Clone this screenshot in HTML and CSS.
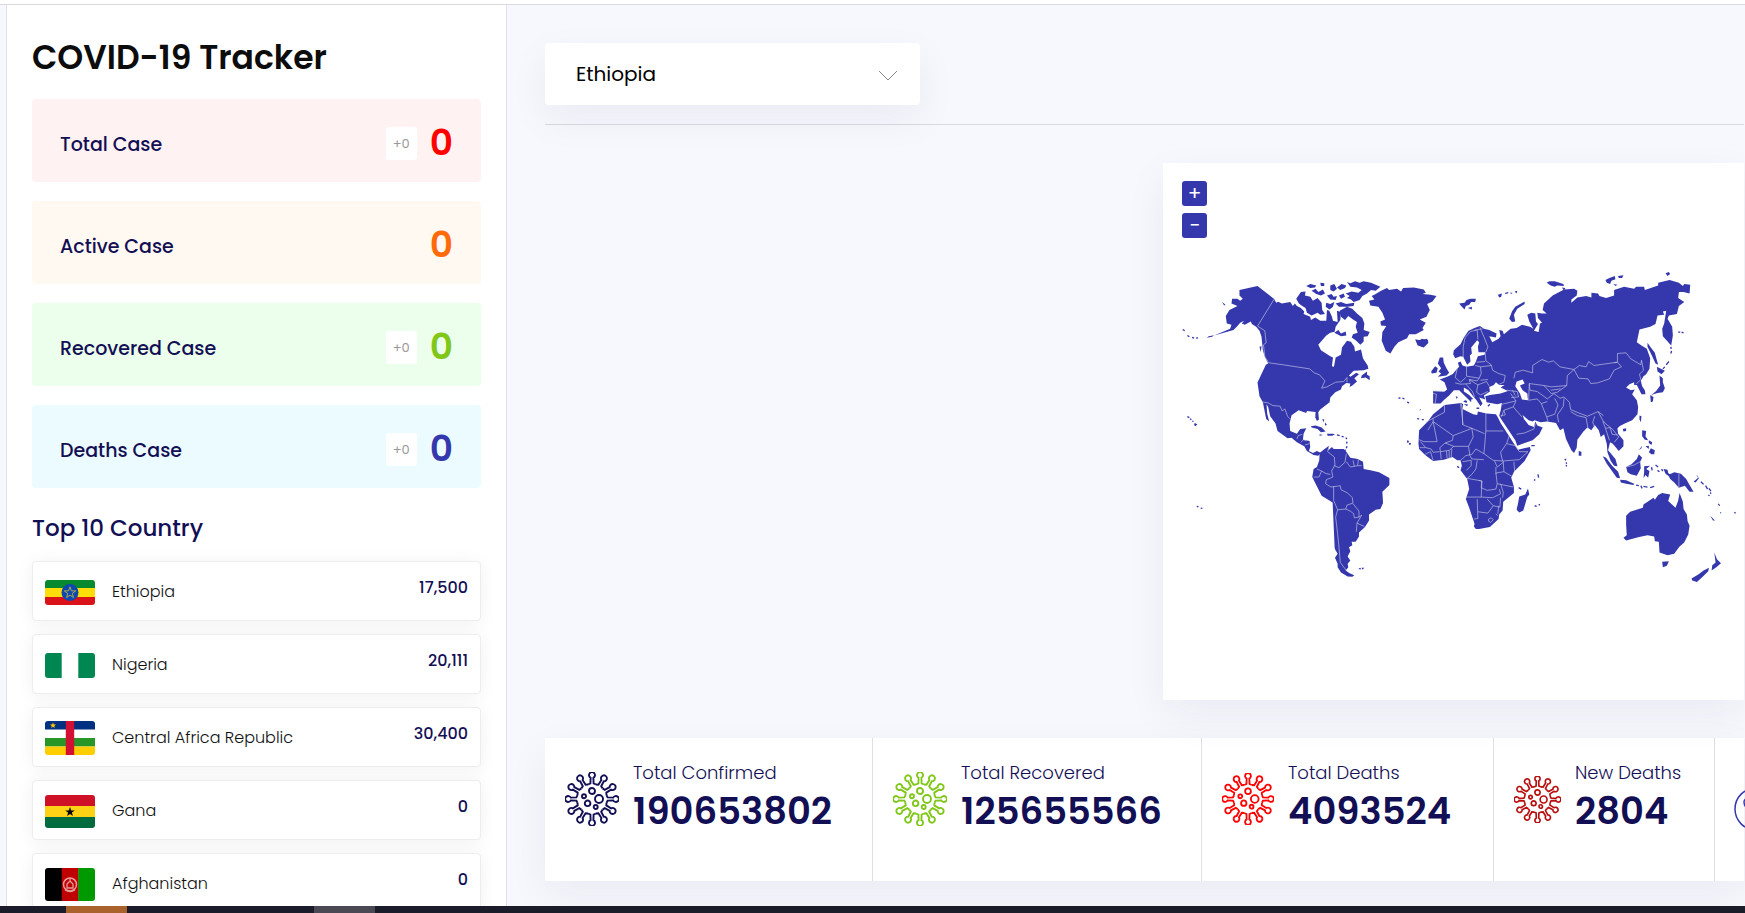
FILE: index.html
```html
<!DOCTYPE html>
<html lang="en">
<head>
<meta charset="utf-8">
<title>COVID-19 Tracker</title>
<link rel="stylesheet" href="styles.css">
</head>
<body>
<svg class="defs" aria-hidden="true">
  <defs>
    <path id="spike" d="M-3.9-14.5L-1.6-15.6L-1.4-21.2A3 3 0 1 1 1.4-21.2L1.6-15.6L3.9-14.5"/>
    <symbol id="virus" viewBox="-27 -27 54 54">
      <g fill="none" stroke="currentColor" stroke-width="1.9">
        <use href="#spike"/><use href="#spike" transform="rotate(30)"/><use href="#spike" transform="rotate(60)"/>
        <use href="#spike" transform="rotate(90)"/><use href="#spike" transform="rotate(120)"/><use href="#spike" transform="rotate(150)"/>
        <use href="#spike" transform="rotate(180)"/><use href="#spike" transform="rotate(210)"/><use href="#spike" transform="rotate(240)"/>
        <use href="#spike" transform="rotate(270)"/><use href="#spike" transform="rotate(300)"/><use href="#spike" transform="rotate(330)"/>
        <circle cy="-8" r="3"/><circle cx="7" r="4"/><circle cx="-8" cy="-2.8" r="2"/><circle cx="-4.4" cy="4.3" r="2.8"/><circle cx="3.7" cy="8" r="2"/>
      </g>
    </symbol>
    <path id="star" d="M0-5L1.2-1.6H4.8L1.9.6L2.9 4L0 1.9L-2.9 4L-1.9.6L-4.8-1.6H-1.2Z"/>
  </defs>
</svg>
<div class="page">
  <div class="topline"></div>
  <div class="layout">
    <aside class="sidebar">
      <h1>COVID-19 Tracker</h1>
      <div class="cases">
        <div class="case total"><span class="name">Total Case</span><span class="delta">+0</span><strong>0</strong></div>
        <div class="case active"><span class="name">Active Case</span><strong>0</strong></div>
        <div class="case recovered"><span class="name">Recovered Case</span><span class="delta">+0</span><strong>0</strong></div>
        <div class="case deaths"><span class="name">Deaths Case</span><span class="delta">+0</span><strong>0</strong></div>
      </div>
      <h2>Top 10 Country</h2>
      <ul class="countries">
        <li>
          <svg class="flag" viewBox="0 0 50 25"><path fill="#078930" d="M0 0h50v9H0z"/><path fill="#fcdd09" d="M0 8h50v9H0z"/><path fill="#da121a" d="M0 17h50v8H0z"/><circle cx="25" cy="12.5" r="8.5" fill="#0f47af"/><use href="#star" transform="translate(25 12.8) scale(1.2)" fill="none" stroke="#a9b04e" stroke-width=".8"/></svg>
          <span>Ethiopia</span><b>17,500</b>
        </li>
        <li>
          <svg class="flag" viewBox="0 0 50 25"><path fill="#fff" d="M0 0h50v25H0z"/><path fill="#008751" d="M0 0h16.7v25H0zM33.3 0H50v25H33.3z"/></svg>
          <span>Nigeria</span><b>20,111</b>
        </li>
        <li>
          <svg class="flag" viewBox="0 0 50 34"><path fill="#fff" d="M0 0h50v34H0z"/><path fill="#003082" d="M0 0h50v8.5H0z"/><path fill="#289728" d="M0 17h50v8.5H0z"/><path fill="#ffce00" d="M0 25.500h50V34H0z"/><path fill="#d21034" d="M20.800 0h8.400v34h-8.400z"/><use href="#star" transform="translate(8 4.500) scale(.65)" fill="#ffce00"/></svg>
          <span>Central Africa Republic</span><b>30,400</b>
        </li>
        <li>
          <svg class="flag" viewBox="0 0 50 33"><path fill="#ce1126" d="M0 0h50v11H0z"/><path fill="#fcd116" d="M0 11h50v11H0z"/><path fill="#006b3f" d="M0 22h50v11H0z"/><use href="#star" transform="translate(25 17)"/></svg>
          <span>Gana</span><b>0</b>
        </li>
        <li>
          <svg class="flag" viewBox="0 0 50 33"><path d="M0 0h17v33H0z"/><path fill="#be0000" d="M16.700 0h17v33h-17z"/><path fill="#009900" d="M33.300 0H50v33H33.300z"/><g fill="none" stroke="#e89a9a"><circle cx="25" cy="16.500" r="6.500" stroke-width="1.500"/><path d="M22 20v-4l3-3l3 3v4zM20 22q5 3 10 0M25 10v3" stroke-width="1.300"/></g></svg>
          <span>Afghanistan</span><b>0</b>
        </li>
      </ul>
    </aside>
    <main>
      <div class="toolbar">
        <div class="picker">
          <select aria-label="Country"><option>Ethiopia</option><option>Nigeria</option><option>Afghanistan</option></select>
          <svg viewBox="0 0 20 12"><path d="M1 1L10 10L19 1" fill="none" stroke="#888"/></svg>
        </div>
      </div>
      <section class="mapcard" aria-label="World map">
        <div class="zoom"><button type="button" aria-label="Zoom in">+</button><button type="button" aria-label="Zoom out">−</button></div>
        <svg class="map" viewBox="39 330 1740 1020">
          <g class="land">
            <path d="M268 420L322 408L372 447L378 458L384 455L395 460L420 456L428 468L434 460L440 468L452 474L462 484L460 492L480 500L482 510L495 502L510 512L528 512L530 480L537 482L545 500L548 512L562 516L560 482L572 486L570 510L556 530L553 545L540 548L528 556L504 584L512 600L540 618L548 622L545 648L551 650L556 622L572 614L575 592L590 572L602 575L612 590L614 604L632 598L638 625L652 646L654 656L640 660L610 662L596 676L600 680L618 668L626 672L612 684L620 694L606 706L598 710L600 700L588 698L575 708L572 718L555 726L540 742L538 756L510 778L504 786L506 808L500 812L495 802L496 785L470 782L468 788L445 780L424 795L418 820L420 842L440 850L450 836L468 834L460 850L458 868L478 872L480 890L476 902L488 908L500 902L512 908L504 916L490 914L470 902L462 888L440 876L424 862L412 864L382 842L376 820L360 798L354 770L349 762L351 790L357 814L348 806L344 786L338 756L328 738L322 697L347 644L354 640L344 620L338 600L334 560L328 542L318 530L305 522L302 514L284 524L275 520L282 512L270 518L262 528L250 540L192 556L240 536L244 524L230 520L227 498L238 480L250 474L262 468L244 460L246 446L262 446L270 452L278 446L268 436Z"/>
            <path d="M676 432L692 422L710 414L716 420L740 416L752 424L758 414L790 412L820 418L826 428L816 432L840 434L858 438L846 454L830 462L838 480L828 500L808 508L826 518L816 534L820 540L796 552L776 552L770 564L744 576L732 590L720 610L706 602L694 572L696 546L708 528L692 526L690 514L704 508L696 488L684 470L660 466L656 452L672 448L664 438Z"/>
            <path d="M650 664L634 676L632 684L646 682L658 690L658 678L650 674ZM796 568L806 572L814 566L832 570L832 580L818 591L802 584ZM438 446L452 426L466 424L464 436L480 440L488 452L502 444L514 458L516 480L524 492L510 494L502 488L484 496L470 488L466 474L456 468L446 460ZM468 408L480 402L498 406L494 412L480 414ZM510 398L522 400L522 408L512 408ZM484 422L496 416L504 426L518 418L524 430L512 436L498 432ZM540 406L552 402L560 416L550 424L540 420ZM560 412L574 402L588 406L584 414L570 420ZM590 396L600 400L614 394L628 398L640 394L662 398L690 410L676 422L662 420L650 430L636 438L628 450L610 456L602 448L590 444L598 438L586 430L604 424L624 428L634 420L620 412L600 410ZM530 436L544 432L550 440L560 438L556 450L540 448ZM528 458L540 462L552 456L548 470L538 478L526 470ZM566 436L580 430L584 440L572 446ZM556 460L572 456L588 462L612 458L610 468L590 470L566 470ZM568 482L590 470L606 476L620 490L636 504L642 520L640 540L658 546L652 558L640 560L640 574L630 584L616 570L604 562L608 552L622 548L616 530L620 516L608 508L594 498L584 510L572 500ZM552 548L564 540L572 550L586 544L588 556L572 558L564 554ZM216 456L226 464L222 466ZM328 590L334 588L332 606ZM482 828L496 826L514 832L526 844L512 846L502 836L484 832ZM530 850L548 850L554 852L546 856L532 856ZM508 852L518 854L508 856ZM516 806L522 808L520 816ZM524 816L530 824L524 826ZM134 818L142 822L136 828L132 824ZM192 555L176 558L170 563L186 560Z"/>
            <path d="M508 908L520 898L536 886L534 900L545 890L550 896L580 896L588 904L600 922L622 926L638 934L640 956L660 960L686 966L717 983L717 1004L696 1024L698 1058L690 1076L676 1078L656 1092L656 1110L644 1130L626 1146L626 1158L616 1174L604 1174L606 1184L596 1190L600 1202L592 1218L600 1230L592 1240L594 1250L586 1260L598 1268L612 1274L606 1279L592 1278L572 1266L562 1250L562 1240L554 1222L562 1210L554 1196L553 1190L547 1056L514 1036L496 1000L486 980L490 956L500 950L507 930ZM624 1254L632 1252L630 1258ZM634 1252L642 1252L636 1258Z"/>
            <path d="M98 538L104 542M112 556L118 560M126 562L132 564M138 564L144 563M744 743L750 744M756 744L762 746M770 756L776 758M808 778L810 779M800 805L806 806M814 808L820 808M770 872L775 874M778 878L780 882M112 799L118 802M120 806L124 808M127 812L130 814M140 1068L145 1069M152 1073L157 1074M560 854L568 856M574 858L580 860M586 862L590 866M590 874L589 880M590 888L588 894M586 898L582 902" class="dots"/>
          </g>
          <g class="land" transform="translate(750 300)">
            <path d="M160 300L180 282L190 262L204 242L222 234L238 228L250 236L266 240L288 250L286 262L266 258L275 276L294 266L300 258L296 240L306 242L310 252L330 236L348 234L364 224L388 230L398 236L386 214L380 194L392 188L404 190L406 214L412 222L400 242L414 246L418 220L424 218L412 204L410 188L424 190L438 190L426 180L430 160L456 136L490 118L520 116L530 122L528 136L512 148L512 158L530 142L556 138L572 142L572 128L592 130L596 138L616 144L640 136L640 120L670 110L700 116L706 110L730 110L732 120L772 106L772 98L806 90L834 98L846 108L850 102L868 104L866 130L848 126L834 126L832 144L850 156L834 168L828 192L804 196L800 206L814 230L816 256L811 286L786 258L784 236L790 220L796 182L786 184L790 194L770 196L764 222L748 230L716 238L708 276L722 286L738 296L748 324L746 356L736 372L728 378L720 392L724 408L732 420L734 432L722 432L708 404L700 404L700 396L686 402L676 412L690 420L702 418L694 432L708 450L712 470L710 492L694 510L672 520L656 528L650 535L652 550L668 570L668 588L654 602L646 592L636 580L628 576L622 600L632 612L644 626L650 648L640 646L630 632L620 606L618 580L610 552L600 560L594 540L582 524L572 540L560 532L548 544L530 568L528 592L520 608L512 600L496 566L488 534L478 540L466 518L440 514L420 516L402 510L396 514L384 510L366 494L370 506L384 524L400 530L404 514L410 526L426 532L416 552L396 570L350 586L344 570L324 540L300 504L296 496L300 482L304 458L290 462L258 456L254 438L268 434L300 430L322 422L300 412L312 404L296 404L286 396L280 404L266 410L268 424L250 436L254 448L236 442L246 460L240 468L228 450L216 436L204 420L190 412L190 424L206 434L218 446L212 448L212 456L204 448L190 434L176 420L160 420L146 436L132 448L120 460L98 460L98 422L132 424L140 418L132 396L118 388L140 380L156 372L170 356L176 350L172 338L180 334L186 346L198 350L220 346L226 334L232 318L252 314L254 306L234 306L232 290L236 276L230 270L212 292L214 310L208 316L210 334L200 344L188 320L180 318L164 324L158 312Z"/>
            <path d="M176 160L192 158L198 150L210 146L226 146L224 156L212 156L206 164L196 168L192 178L182 168ZM202 174L214 170L214 178ZM292 134L304 130L302 140L296 142ZM314 128L324 126L322 130L314 132ZM328 128L336 128L332 132ZM342 124L350 122L348 130ZM326 206L334 184L344 170L372 154L372 162L350 176L340 194L344 214L334 216ZM438 98L446 94L462 94L488 102L490 108L470 106L462 110L450 106ZM484 112L494 114L490 122ZM614 90L626 84L642 78L644 88L632 92L628 102L618 98ZM652 78L668 76L664 84L654 84ZM638 102L650 104L644 108ZM794 70L804 66L808 72L800 78ZM740 278L750 292L762 308L768 330L772 344L764 340L754 318L746 302L740 290ZM768 350L780 356L792 362L782 372L770 364ZM776 376L786 384L786 396L792 414L786 426L770 428L758 432L750 436L766 422L778 406ZM748 434L758 440L756 454L750 456ZM716 496L722 498L720 516L716 508ZM118 322L128 322L130 338L138 354L146 368L138 376L112 380L122 370L114 364L122 354L112 340ZM92 364L104 348L112 354L108 368L94 370ZM44 268L62 270L80 266L84 276L70 292L52 286ZM194 450L200 452L198 458L188 454ZM190 462L202 462L200 468ZM166 438L172 440L168 446Z"/>
            <path d="M810 290L811 296M812 302L810 310M804 334L796 344M792 350L786 356M832 246L838 246M842 246L848 248M228 474L236 474M262 468L268 462" class="dots"/>
            <path d="M348 394L366 388L372 400L358 406L366 420L380 430L382 450L364 448L358 430L344 408Z" class="sea"/>
          </g>
          <g class="land" transform="translate(750 720)">
            <path d="M98 72L132 44L182 38L188 42L186 56L218 72L230 74L232 64L258 70L286 72L292 82L300 98L318 126L340 160L352 178L388 170L390 180L372 212L340 244L332 262L340 290L340 308L308 334L306 360L296 372L294 386L268 410L236 416L226 416L220 408L222 400L206 352L196 326L206 296L200 266L180 240L184 226L180 210L170 210L156 200L130 208L98 212L74 194L56 176L54 160L56 120L82 94Z"/>
            <path d="M382 294L386 312L380 320L368 360L356 366L348 358L352 340L356 318L374 312ZM534 182L542 184L542 196L534 196ZM666 116L676 114L676 122L668 124ZM606 198L616 202L634 226L652 244L658 264L648 262L632 240L618 220ZM658 268L676 270L700 280L698 284L676 280L660 276ZM676 230L692 222L708 206L714 192L724 202L718 214L720 234L708 256L690 252L680 246ZM724 120L736 122L734 138L742 150L732 148L724 138ZM744 150L754 156L752 164L744 158ZM750 174L762 180L760 192L752 192L744 186ZM714 180L724 166L722 174ZM734 168L744 166L744 176ZM730 228L748 226L736 236L746 242L742 262L734 254L728 264L730 244ZM788 236L800 238L802 248L812 256L804 258L794 250ZM802 254L820 246L840 250L856 266L866 284L878 304L866 304L852 286L834 292L820 276L808 266ZM878 274L890 264L892 258L886 254L894 264L884 276ZM784 514L804 512L798 526L786 530ZM940 486L948 506L960 518L946 530L932 540L934 524L944 516ZM872 564L892 552L908 540L924 532L922 542L906 558L888 574L874 570ZM928 376L942 390L936 390Z"/>
            <path d="M676 376L688 364L726 352L728 342L758 322L762 328L772 314L784 308L808 312L802 332L824 352L832 330L836 308L846 334L848 356L858 372L860 392L866 406L862 432L850 456L836 468L820 490L800 494L776 486L774 454L762 452L760 438L740 434L712 440L676 450L668 442L678 434L676 404Z"/>
            <path d="M706 284L714 286M720 286L724 294M728 288L740 290M748 292L760 288M752 230L754 240M764 224L772 230M770 240L776 244M782 236L786 242M900 274L908 282M914 286L920 296M924 294L930 302M928 306L930 310M922 314L926 316M952 340L956 346M958 366L960 368M1000 366L1004 368M492 206L496 210M496 216L498 220M496 224L498 228M412 252L414 262M400 268L404 270M354 292L362 296M402 346L408 348M414 344L418 342M392 166L402 166M170 228L176 232M20 154L24 156M26 160L30 162" class="dots"/>
          </g>
          <g class="borders">
            <path d="M372 447L322 528L344 542L348 578L340 584L344 620L356 638L400 644L478 656L492 668L508 674L524 692L514 714L530 710L556 696L580 694L590 682L590 696M336 755L354 758L368 766L390 768L396 782L404 776L412 798L420 806M440 866L444 856L456 852M452 876L460 868L468 872M464 884L478 880M536 888L532 904L552 920L554 944L544 962L548 980L528 988L526 1000L542 1010L570 1006L572 1018L592 1028L606 1042L608 1058L590 1064L586 1076L562 1078L550 1050L550 1008M490 980L506 980L514 962L500 956M514 962L528 970L540 972M552 946L566 952L584 936L588 910M588 934L600 950L612 948L608 930M612 948L622 946L624 928M622 946L634 946M562 1078L556 1100L562 1150L566 1190L570 1236L588 1260M586 1076L600 1082L610 1090L612 1102L626 1100L626 1082L608 1060M626 1100L634 1094L620 1118L618 1144M620 1118L642 1128"/>
            <g transform="translate(750 300)">
              <path d="M188 322L188 290L194 262L210 244L230 240L232 268M238 232L250 260L262 290L256 306M222 240L246 236M254 308L256 332L272 344L276 360L294 370L314 376L310 396L296 402M228 336L254 334M224 346L240 350L272 346M240 350L242 370L236 384L198 378L198 350M170 356L164 382L180 396L196 382M236 384L230 392L206 388L210 400L180 402L164 398M206 388L232 404L258 394L266 408M232 404L228 426L240 434L262 424M196 402L216 424L222 440M240 390L262 388M98 422L132 424M98 430L108 432L104 460M340 384L344 366L368 360L396 368L396 346L424 328L444 336L458 332L478 350L520 358L500 376L498 406L452 410L430 406L386 400L388 420L410 424L440 446M386 400L384 450L410 446L422 460L440 454M430 406L452 430L470 426L498 406M450 420L480 416M440 446L460 430L478 444L490 440L506 456L510 478L534 488L560 498L592 484L606 510L620 526M510 484L530 496L556 502L562 536M490 444L488 468L470 494L474 516M462 444L472 464L462 492L438 500L430 480L422 460M438 500L442 514M520 358L536 346L556 350L564 334L580 346L608 342L650 336L662 350L640 360L626 386L590 398L570 400L562 386L534 384L520 358M640 338L650 336L650 310L676 308L690 326L720 344L722 330L728 360L716 372L720 388L706 402M318 420L350 424L354 440L332 442M336 420L344 436M304 462L346 452L338 470L364 500M346 452L330 430M338 470L310 480L302 500M310 480L314 494L300 496M348 552L372 548L400 536L404 520M582 498L576 516L584 536M592 484L608 496M606 512L614 534L626 570M620 524L636 538L654 560L640 576M614 534L628 532L634 552L650 554"/>
            </g>
            <g transform="translate(750 720)">
              <path d="M132 44L132 66L98 84L98 94L158 136L214 114L188 104L180 40M98 84L76 96M98 94L110 154L70 154L56 148M82 120L98 94M182 40L186 56L186 104M214 114L252 130M256 68V122H308M256 122L252 170L250 190L226 176L214 192L196 196L180 210M214 114L218 140L204 168L160 168L134 158L118 172L120 184L146 180L160 168M158 136L156 150L134 158M60 154L76 172L92 176L98 186L118 184M58 172L76 172M74 192L90 184L98 210M120 184L122 206M138 182L140 204M146 180V204M154 176L152 200M204 168L208 196L214 206L250 208M250 190L278 210L306 212L300 186L318 160L326 136M318 160L344 166L356 184L382 184L356 208L306 212M340 214L342 242M308 216L290 230L282 212M308 212L310 244L334 258M310 244L286 248L290 280L338 290M286 230V250M198 240L212 226L212 210L186 214M230 210L226 236L214 252L200 264L234 270L244 272L242 292L260 300L286 296L290 280M234 270L244 272L242 320L196 320M242 320L276 322L300 310L296 296M300 280L308 306L306 322M230 326L232 384L220 386M232 364L262 368L278 346L260 326M278 346L298 350L300 322M294 346L292 370M286 370L292 376M264 386L272 382L278 388L270 396L264 392ZM678 230L700 224L718 214M834 250V292M630 186L634 192"/>
            </g>
          </g>
        </svg>
      </section>
      <section class="stats" aria-label="Worldwide figures">
        <div class="stat"><svg class="icon navy"><use href="#virus"/></svg><div><span>Total Confirmed</span><strong>190653802</strong></div></div>
        <div class="stat"><svg class="icon green"><use href="#virus"/></svg><div><span>Total Recovered</span><strong>125655566</strong></div></div>
        <div class="stat"><svg class="icon red medium"><use href="#virus"/></svg><div><span>Total Deaths</span><strong>4093524</strong></div></div>
        <div class="stat"><svg class="icon crimson small"><use href="#virus"/></svg><div><span>New Deaths</span><strong>2804</strong></div></div>
        <div class="stat last"><svg class="globe" viewBox="0 0 44 44"><g fill="none" stroke="#3538ad" stroke-width="1.500"><circle cx="22" cy="22" r="21"/><path d="M22 12C16 10 10 11 10 15C10 19 13 22 18 24L22 30"/></g></svg></div>
      </section>
    </main>
  </div>
  <div class="taskbar"><i class="orange"></i><i class="grey"></i></div>
</div>
</body>
</html>
```
FILE: styles.css
```css
* { box-sizing: border-box; }
body { margin: 0; background: #f7f8fd; color: #111; font-family: Poppins, Inter, "Open Sans", sans-serif; }
.defs { position: absolute; width: 0; height: 0; }
.page { height: 100vh; display: flex; flex-direction: column; overflow: hidden; }
.topline { flex: none; height: 5px; background: #fff; border-bottom: 1px solid #dadbe0; }
.layout { flex: 1; min-height: 0; display: flex; overflow: hidden; }
.sidebar { flex: none; width: 501px; margin-left: 6px; padding: 33px 25px 0; background: #fff; border: solid #dfe0e8; border-width: 0 1px; }
h1 { margin: 0; font-size: 33px; line-height: 40px; font-weight: 600; color: #0c0c0c; }
.cases { display: grid; gap: 19px; margin-top: 21px; }
.case { display: flex; align-items: center; height: 83px; padding: 0 28px 0 28px; border-radius: 4px; }
.name { flex: 1; padding-top: 8px; font-size: 19px; line-height: 24px; font-weight: 500; color: #130f55; }
.delta { width: 31px; margin-top: 5px; border-radius: 3px; background: #fff; color: #999; font-size: 13px; line-height: 33px; font-weight: 400; text-align: center; }
.case strong { margin-left: 13px; padding-top: 4px; font-size: 36px; line-height: 40px; font-weight: 600; }
.total { background: #fff2f2; } .total strong { color: #f00; }
.active { background: #fff9f2; } .active strong { color: #ff6a0a; }
.recovered { background: #ecffec; } .recovered strong { color: #80c71a; }
.deaths { background: #ecfbff; } .deaths strong { color: #3538ad; }
h2 { margin: 25px 0 18px; font-size: 23px; line-height: 30px; font-weight: 500; color: #130f55; }
.countries { display: grid; gap: 13px; margin: 0; padding: 0; list-style: none; }
.countries li { display: flex; align-items: center; height: 60px; padding: 2px 12px 0 12px; border: 1px solid #ededf0; border-radius: 4px; background: #fff; box-shadow: 0 2px 18px rgba(0, 0, 0, .06); font-size: 16px; line-height: 24px; }
.countries span { flex: 1; padding-left: 17px; font-weight: 300; }
.countries b { padding-bottom: 8px; font-weight: 500; color: #130f55; }
.flag { width: 50px; border-radius: 3px; }
main { flex: 1; min-width: 0; padding: 38px 1px 0 38px; }
.toolbar { padding-bottom: 19px; border-bottom: 1px solid #dadbe0; }
.picker { position: relative; width: 375px; height: 62px; border-radius: 4px; box-shadow: 0 14px 40px rgba(40, 40, 90, .06); }
.picker select { width: 100%; height: 100%; padding: 0 31px; border: 0; border-radius: 4px; background: #fff; color: #000; font: 400 20px Poppins, Inter, "Open Sans", sans-serif; appearance: none; }
.picker svg { position: absolute; right: 22px; top: 27px; width: 20px; height: 12px; pointer-events: none; }
.mapcard { position: relative; width: 581px; margin: 38px 0 0 auto; padding: 97px 0 99px; background: #fff; box-shadow: 0 14px 40px rgba(40, 40, 90, .06); }
.map { display: block; width: 100%; }
.zoom { position: absolute; left: 19px; top: 18px; display: grid; gap: 7px; }
.zoom button { width: 25px; height: 25px; padding: 0; border: 0; border-radius: 3px; background: #3538ad; color: #fff; font: 400 20px/25px Poppins, Inter, sans-serif; }
.land { fill: #3538ad; }
.dots { fill: none; stroke: #3538ad; stroke-width: 4; }
.land .sea { fill: #fff; }
.borders { fill: none; stroke: #c3c3e2; stroke-width: 2; }
.stats { display: grid; grid-template-columns: 328px 329px 292px 221px 1fr; height: 143px; margin-top: 38px; background: #fff; box-shadow: 0 14px 40px rgba(40, 40, 90, .06); }
.stat { display: flex; align-items: flex-start; min-width: 0; padding: 24px 0 0 20px; border-right: 1px solid #dfe0e4; }
.stat span { display: block; font-size: 18px; line-height: 22px; font-weight: 300; color: #130f55; }
.stat strong { display: block; font-size: 37px; line-height: 55px; font-weight: 600; color: #130f55; }
.stat > div { padding-left: 14px; }
.icon { flex: none; width: 54px; height: 54px; margin-top: 10px; }
.medium { width: 52px; height: 52px; margin-top: 11px; }
.small { width: 47px; height: 47px; margin-top: 14px; }
.navy { color: #130f55; } .green { color: #80c71a; } .red { color: #f00; } .crimson { color: #b70f0f; }
.last { border: 0; padding-left: 19px; }
.globe { flex: none; width: 44px; height: 44px; margin-top: 25px; }
.taskbar { flex: none; display: flex; height: 7px; background: #1b1c29; }
.taskbar i { width: 61px; }
.orange { margin-left: 66px; background: #a9622b; }
.grey { margin-left: 187px; background: #4a4853; }
```
